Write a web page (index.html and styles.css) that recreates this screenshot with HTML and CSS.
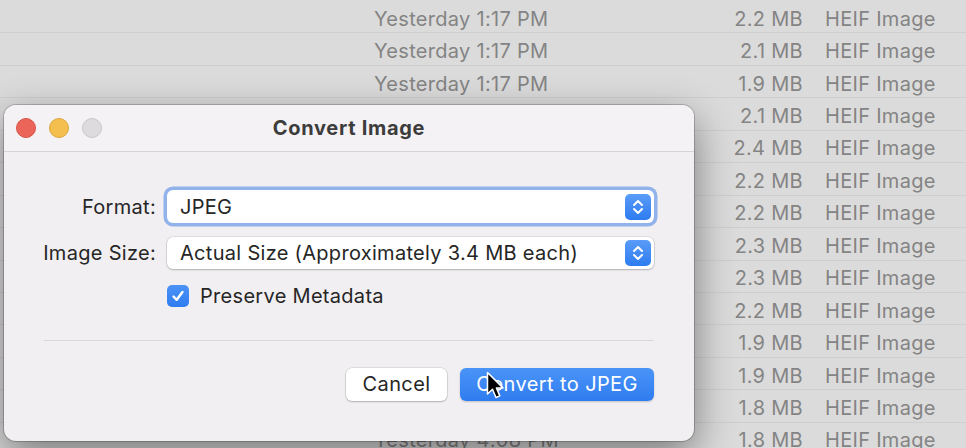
FILE: index.html
```html
<!DOCTYPE html>
<html>
<head>
<meta charset="utf-8">
<link rel="stylesheet" href="styles.css">
</head>
<body>
<div class="list">
  <div class="row"><span class="date">Yesterday 1:17 PM</span><span class="size">2.2 MB</span><span class="kind">HEIF Image</span></div>
  <div class="row"><span class="date">Yesterday 1:17 PM</span><span class="size">2.1 MB</span><span class="kind">HEIF Image</span></div>
  <div class="row"><span class="date">Yesterday 1:17 PM</span><span class="size">1.9 MB</span><span class="kind">HEIF Image</span></div>
  <div class="row"><span class="date">Yesterday 1:17 PM</span><span class="size">2.1 MB</span><span class="kind">HEIF Image</span></div>
  <div class="row"><span class="date">Yesterday 1:17 PM</span><span class="size">2.4 MB</span><span class="kind">HEIF Image</span></div>
  <div class="row"><span class="date">Yesterday 1:17 PM</span><span class="size">2.2 MB</span><span class="kind">HEIF Image</span></div>
  <div class="row"><span class="date">Yesterday 1:17 PM</span><span class="size">2.2 MB</span><span class="kind">HEIF Image</span></div>
  <div class="row"><span class="date">Yesterday 1:17 PM</span><span class="size">2.3 MB</span><span class="kind">HEIF Image</span></div>
  <div class="row"><span class="date">Yesterday 1:17 PM</span><span class="size">2.3 MB</span><span class="kind">HEIF Image</span></div>
  <div class="row"><span class="date">Yesterday 1:17 PM</span><span class="size">2.2 MB</span><span class="kind">HEIF Image</span></div>
  <div class="row"><span class="date">Yesterday 1:17 PM</span><span class="size">1.9 MB</span><span class="kind">HEIF Image</span></div>
  <div class="row"><span class="date">Yesterday 4:08 PM</span><span class="size">1.9 MB</span><span class="kind">HEIF Image</span></div>
  <div class="row"><span class="date">Yesterday 4:08 PM</span><span class="size">1.8 MB</span><span class="kind">HEIF Image</span></div>
  <div class="row"><span class="date">Yesterday 4:08 PM</span><span class="size">1.8 MB</span><span class="kind">HEIF Image</span></div>
</div>

<div class="dialog">
  <div class="titlebar">
    <div class="lights">
      <span class="light red"></span>
      <span class="light yellow"></span>
      <span class="light gray"></span>
    </div>
    <div class="title">Convert Image</div>
    <div></div>
  </div>
  <div class="form">
    <label class="label">Format:</label>
    <div class="popup focused">
      <span>JPEG</span>
      <span class="stepper"><svg width="14" height="20" viewBox="0 0 14 20"><path d="M3 8 L7 4 L11 8 M3 12 L7 16 L11 12" fill="none" stroke="#fff" stroke-width="2" stroke-linecap="round" stroke-linejoin="round"/></svg></span>
    </div>
    <label class="label">Image Size:</label>
    <div class="popup">
      <span>Actual Size (Approximately 3.4 MB each)</span>
      <span class="stepper"><svg width="14" height="20" viewBox="0 0 14 20"><path d="M3 8 L7 4 L11 8 M3 12 L7 16 L11 12" fill="none" stroke="#fff" stroke-width="2" stroke-linecap="round" stroke-linejoin="round"/></svg></span>
    </div>
    <div></div>
    <div class="check-row">
      <span class="checkbox"><svg width="16" height="16" viewBox="0 0 16 16"><path d="M3.5 8.5 L6.7 11.8 L12.5 4" fill="none" stroke="#fff" stroke-width="2.4" stroke-linecap="round" stroke-linejoin="round"/></svg></span>
      <span>Preserve Metadata</span>
    </div>
  </div>
  <div class="separator"></div>
  <div class="buttons">
    <button class="btn cancel">Cancel</button>
    <button class="btn primary">Convert to JPEG</button>
  </div>
  <svg class="cursor" width="20" height="30" viewBox="0 0 20 30"><path d="M1.5 1.5 L1.5 23 L6.5 18.3 L10 26.5 L13.8 24.9 L10.4 16.9 L17 16.9 Z" fill="#000" stroke="#fff" stroke-width="1.5" stroke-linejoin="round"/></svg>
</div>
</body>
</html>
```

FILE: styles.css
```css
html, body {
  margin: 0;
  padding: 0;
}
body {
  width: 966px;
  height: 448px;
  overflow: hidden;
  background: #dbdbdb;
  font-family: Inter, "Liberation Sans", sans-serif;
  position: relative;
}
.list {
  padding-top: 1px;
}
.row {
  height: 32.45px;
  box-sizing: border-box;
  padding-top: 4px;
  border-bottom: 1px solid #cfcfcf;
  display: grid;
  grid-template-columns: 374px 180px 249px 22px 1fr;
  align-items: center;
  font-size: 20px;
  letter-spacing: 0.3px;
  color: #848484;
}
.date {
  grid-column: 2;
  white-space: nowrap;
}
.size {
  grid-column: 3;
  text-align: right;
  white-space: nowrap;
}
.kind {
  grid-column: 5;
  white-space: nowrap;
}
.dialog {
  position: absolute;
  left: 4px;
  top: 105px;
  width: 690px;
  height: 336px;
  box-sizing: border-box;
  border-radius: 12px;
  background: #f1eff1;
  box-shadow: 0 0 0 1px rgba(0,0,0,0.2), 0 14px 40px rgba(0,0,0,0.45);
}
.titlebar {
  height: 46px;
  border-bottom: 1px solid #d6d4d6;
  display: grid;
  grid-template-columns: 1fr auto 1fr;
  align-items: center;
  background: #f4f2f4;
  border-radius: 12px 12px 0 0;
}
.lights {
  display: flex;
  gap: 13px;
  padding-left: 12px;
}
.light {
  width: 20px;
  height: 20px;
  border-radius: 50%;
  box-sizing: border-box;
}
.red {
  background: #ec6559;
  border: 1px solid #d7544a;
}
.yellow {
  background: #f4bf4f;
  border: 1px solid #dca63a;
}
.gray {
  background: #dddbdd;
  border: 1px solid #c9c7c9;
}
.title {
  font-weight: 700;
  font-size: 20px;
  letter-spacing: 0.7px;
  color: #3c3c3c;
}
.form {
  padding-top: 38px;
  display: grid;
  grid-template-columns: 152px 487px;
  column-gap: 11px;
  row-gap: 14px;
  align-items: center;
  font-size: 20px;
  letter-spacing: 0.3px;
  color: #262626;
}
.label {
  text-align: right;
}
.popup {
  height: 32px;
  box-sizing: border-box;
  background: #fff;
  border-radius: 6px;
  box-shadow: 0 0 0 0.5px rgba(0,0,0,0.15), 0 1px 2px rgba(0,0,0,0.2);
  display: flex;
  align-items: center;
  justify-content: space-between;
  padding: 0 3px 0 13px;
}
.popup.focused {
  height: 33px;
  box-shadow: 0 0 0 3.5px #92b2ec, 0 1px 2px rgba(0,0,0,0.2);
}
.stepper {
  width: 26px;
  height: 26px;
  border-radius: 5px;
  background: linear-gradient(#5a9cf8, #2e7cf0);
  display: flex;
  align-items: center;
  justify-content: center;
}
.check-row {
  display: flex;
  align-items: center;
  gap: 11px;
  margin-top: 1px;
}
.checkbox {
  width: 22px;
  height: 22px;
  border-radius: 5px;
  background: linear-gradient(#4c93f7, #2f7bf0);
  display: flex;
  align-items: center;
  justify-content: center;
}
.separator {
  margin: 32px 40px 0 40px;
  height: 1px;
  background: #d9d7d9;
}
.buttons {
  display: flex;
  justify-content: flex-end;
  gap: 13px;
  padding: 27px 40px 0 0;
}
.btn {
  height: 33px;
  border: none;
  border-radius: 6px;
  font-family: Inter, "Liberation Sans", sans-serif;
  font-size: 20px;
  letter-spacing: 0.4px;
  padding: 0 0 1px 0;
}
.cancel {
  width: 101px;
  background: #fff;
  color: #262626;
  box-shadow: 0 0 0 0.5px rgba(0,0,0,0.15), 0 1px 2px rgba(0,0,0,0.2);
}
.primary {
  width: 194px;
  background: linear-gradient(#4a94f8, #2f7cf0);
  color: #fff;
  box-shadow: 0 1px 2px rgba(0,0,0,0.2);
}
.cursor {
  position: absolute;
  left: 482px;
  top: 266px;
}
```
